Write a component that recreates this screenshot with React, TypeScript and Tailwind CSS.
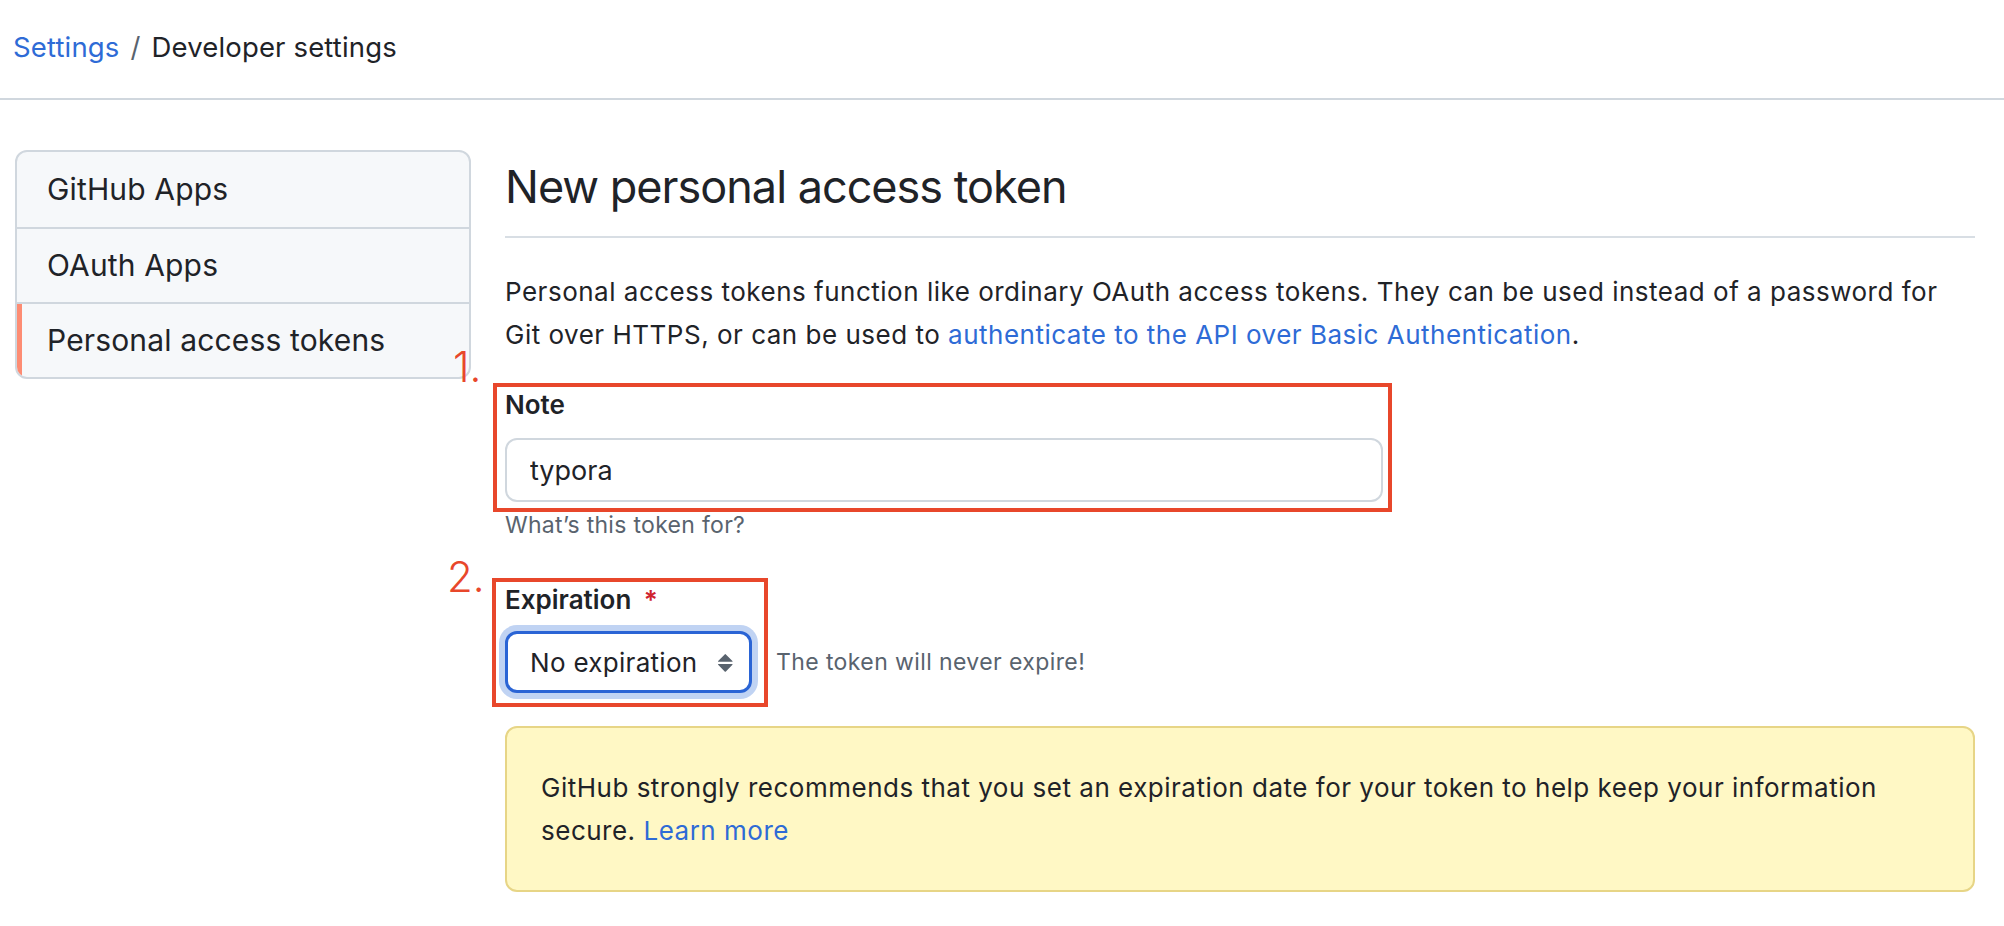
import { useState } from "react";

const navItems = ["GitHub Apps", "OAuth Apps", "Personal access tokens"];

function UpDownIcon() {
    return (
        <svg width="32" height="32" viewBox="0 0 16 16" fill="currentColor" aria-hidden="true">
            <path d="m4.074 9.427 3.396 3.396a.25.25 0 0 0 .354 0l3.396-3.396A.25.25 0 0 0 11.043 9H4.251a.25.25 0 0 0-.177.427ZM4.074 7.47l3.396-3.396a.25.25 0 0 1 .354 0l3.396 3.396a.25.25 0 0 1-.177.427H4.251a.25.25 0 0 1-.177-.427Z" />
        </svg>
    );
}

export default function App() {
    const [note, setNote] = useState("typora");
    const [expiration, setExpiration] = useState("none");
    const active = "Personal access tokens";

    return (
        <div className="min-h-screen bg-white font-['Inter',sans-serif] text-[#1f2328]">
            {/* Breadcrumb */}
            <header className="flex h-[100px] items-center border-b-2 border-[#d0d7de] px-[13px] pb-[4px] text-[27.5px] leading-[40px] tracking-[0.15px]">
                <a href="#" className="text-[#2e6bd6]">Settings</a>
                <span className="mx-[11px] text-[#59636e]">/</span>
                <span>Developer settings</span>
            </header>

            <div className="flex gap-[34px] pl-[15px] pr-[29px] pt-[50px]">
                {/* Sidebar */}
                <nav className="w-[456px] shrink-0 self-start overflow-hidden rounded-[12px] border-2 border-[#d0d7de] bg-[#f6f8fa]">
                    {navItems.map((item, i) => (
                        <a
                            key={item}
                            href="#"
                            className={
                                "flex h-[75px] items-center pl-[30px] text-[30px] tracking-[0.15px] " +
                                (i > 0 ? "border-t-2 border-[#d0d7de] " : "") +
                                (item === active ? "shadow-[inset_5px_0_0_#fd8c73]" : "")
                            }
                        >
                            {item}
                        </a>
                    ))}
                </nav>

                {/* Main */}
                <main className="min-w-0 flex-1">
                    <h1 className="border-b-2 border-[#d8dee4] pb-[21px] pt-[8px] text-[45px] font-normal leading-[57px] tracking-[-1px]">
                        New personal access token
                    </h1>

                    <p className="mt-[32px] text-[26px] leading-[43px] tracking-[0.5px]">
                        Personal access tokens function like ordinary OAuth access tokens. They can be used instead of a password for
                        Git over HTTPS, or can be used to{" "}
                        <a href="#" className="text-[#2e6bd6]">authenticate to the API over Basic Authentication</a>.
                    </p>

                    {/* Note */}
                    <div className="relative mt-[31px] w-[878px]">
                        <span className="absolute left-[-52px] top-[-41px] text-[42px] font-light leading-none text-[#e8472b]">1.</span>
                        <div className="pointer-events-none absolute -bottom-[10px] -left-[12px] -right-[9px] -top-[4px] border-4 border-[#e8472b]" />
                        <label className="block text-[26px] font-semibold leading-[36px]">Note</label>
                        <input
                            value={note}
                            onChange={(e) => setNote(e.target.value)}
                            className="mt-[15px] h-[64px] w-full rounded-[12px] border-2 border-[#d0d7de] px-[23px] text-[27px] outline-none"
                        />
                    </div>
                    <p className="mt-[8px] text-[23px] leading-[30px] tracking-[0.3px] text-[#59636e]">What’s this token for?</p>

                    {/* Expiration */}
                    <div className="mt-[42px] flex items-end gap-[24px]">
                        <div className="relative">
                            <span className="absolute left-[-58px] top-[-26px] text-[42px] font-light leading-none text-[#e8472b]">2.</span>
                            <div className="pointer-events-none absolute -bottom-[14px] -left-[13px] -right-[16px] -top-[4px] border-4 border-[#e8472b]" />
                            <label className="block text-[26px] font-semibold leading-[36px]">
                                Expiration <span className="ml-[6px] text-[#cf222e]">*</span>
                            </label>
                            <div className="relative mt-[13px] w-[247px]">
                                <select
                                    value={expiration}
                                    onChange={(e) => setExpiration(e.target.value)}
                                    className="h-[62px] w-full appearance-none rounded-[12px] border-[3px] border-[#2a64d5] bg-white pl-[22px] text-[26px] tracking-[0.3px] shadow-[0_0_0_6px_#c0d3f3] outline-none"
                                >
                                    <option value="none">No expiration</option>
                                    <option value="7">7 days</option>
                                    <option value="30">30 days</option>
                                    <option value="90">90 days</option>
                                </select>
                                <span className="pointer-events-none absolute right-[10px] top-1/2 -translate-y-1/2 text-[#59636e]">
                                    <UpDownIcon />
                                </span>
                            </div>
                        </div>
                        <span className="flex h-[62px] items-center text-[23px] tracking-[0.4px] text-[#59636e]">The token will never expire!</span>
                    </div>

                    {/* Warning */}
                    <div className="mt-[33px] rounded-[12px] border-2 border-[#e7d586] bg-[#fff8c5] px-[34px] py-[38px] text-[26px] leading-[43px] tracking-[0.5px]">
                        GitHub strongly recommends that you set an expiration date for your token to help keep your information
                        secure. <a href="#" className="text-[#2e6bd6]">Learn more</a>
                    </div>
                </main>
            </div>
        </div>
    );
}
